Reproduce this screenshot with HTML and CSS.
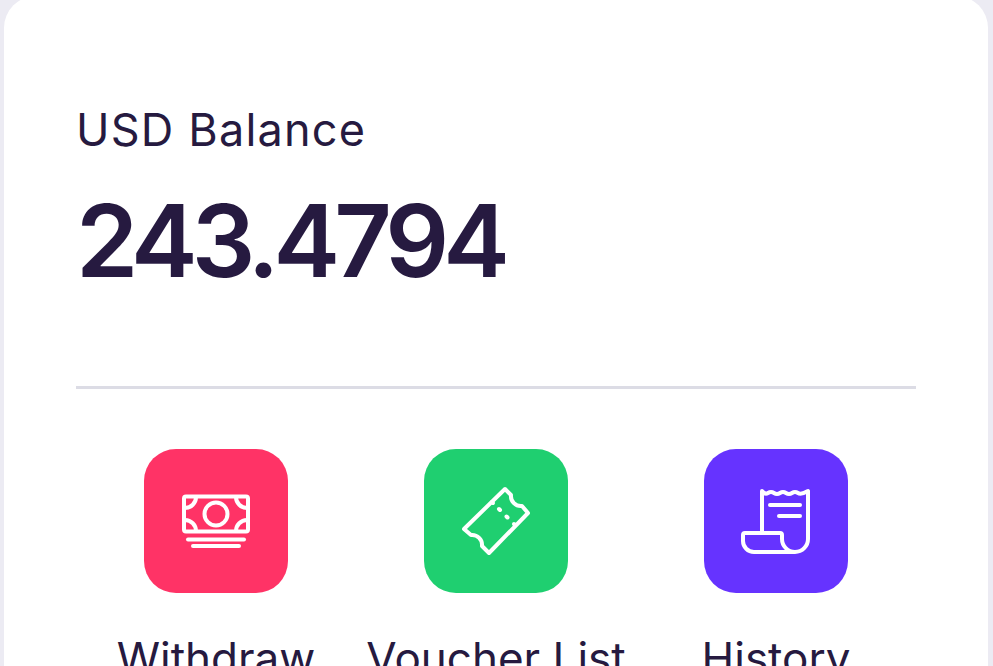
FILE: index.html
```html
<!DOCTYPE html>
<html lang="en">
<head>
    <meta charset="UTF-8">
    <title>USD Balance</title>
    <link rel="stylesheet" href="styles.css">
</head>
<body>
    <div class="card">
        <div class="balance">
            <p class="balance-label">USD Balance</p>
            <p class="balance-value">243.4794</p>
        </div>
        <div class="actions">
            <div class="action">
                <div class="tile tile-withdraw">
                    <svg viewBox="0 0 144 144" width="144" height="144" fill="none" stroke="#fff" stroke-width="4" stroke-linecap="round" stroke-linejoin="round">
                        <rect x="40" y="47.5" width="64" height="35" rx="2"/>
                        <circle cx="72" cy="65" r="11.5"/>
                        <path d="M52 48 A11 11 0 0 1 41 59"/>
                        <path d="M92 48 A11 11 0 0 0 103 59"/>
                        <path d="M52 82 A11 11 0 0 0 41 71"/>
                        <path d="M92 82 A11 11 0 0 1 103 71"/>
                        <path d="M44 90.5 H100"/>
                        <path d="M49 97 H95"/>
                    </svg>
                </div>
                <span class="action-label">Withdraw</span>
            </div>
            <div class="action">
                <div class="tile tile-voucher">
                    <svg viewBox="0 0 144 144" width="144" height="144" fill="none" stroke="#fff" stroke-width="4" stroke-linecap="round" stroke-linejoin="round">
                        <path d="M81 40 L87 46 A10 10 0 0 0 98 57 L104 64 L65 104 L58 97 A10 10 0 0 0 47 86 L40 80 Z"/>
                        <path d="M68 53 L69 54"/>
                        <path d="M75 60 L76 61"/>
                        <path d="M82.5 67.5 L83.5 68.5"/>
                        <path d="M90 75 L91 76"/>
                    </svg>
                </div>
                <span class="action-label">Voucher List</span>
            </div>
            <div class="action">
                <div class="tile tile-history">
                    <svg viewBox="0 0 144 144" width="144" height="144" fill="none" stroke="#fff" stroke-width="4" stroke-linecap="round" stroke-linejoin="round">
                        <path d="M58 83 V42 q3 4 6 2 t6 0 t6 0 t6 0 t6 0 t6 0 t10 -2 V90 a13 13 0 0 1 -13 13 H50 a11 11 0 0 1 -11 -11 v-6 a2 2 0 0 1 2 -2 H76 a2 2 0 0 1 2 2 v4 a13 13 0 0 0 13 13"/>
                        <path d="M66 56 H96"/>
                        <path d="M75 67 H96"/>
                    </svg>
                </div>
                <span class="action-label">History</span>
            </div>
        </div>
    </div>
</body>
</html>
```

FILE: styles.css
```css
html, body {
    height: 100%;
}
body {
    margin: 0;
    padding: 0 5px 0 4px;
    overflow: hidden;
    background-color: #ecebf3;
    color: #261a40;
    font-family: 'Inter', 'Open Sans', sans-serif;
}
.card {
    background-color: #fff;
    border-radius: 32px;
    margin-top: -4px;
    padding: 0 72px;
    height: 760px;
}
.balance {
    padding-top: 108px;
    padding-bottom: 80px;
    border-bottom: 3px solid #dcdce5;
}
.balance-label {
    margin: 0;
    font-size: 45px;
    line-height: 52px;
    font-weight: 400;
    letter-spacing: 1.2px;
}
.balance-value {
    margin: 20px 0 0;
    font-size: 100px;
    line-height: 130px;
    font-weight: 600;
    letter-spacing: -5.8px;
}
.actions {
    display: grid;
    grid-template-columns: repeat(3, 1fr);
    padding-top: 60px;
}
.action {
    display: flex;
    flex-direction: column;
    align-items: center;
    gap: 39px;
}
.tile {
    width: 144px;
    height: 144px;
    border-radius: 32px;
}
.tile svg {
    display: block;
}
.tile-withdraw { background-color: #ff3366; }
.tile-voucher { background-color: #1fcf70; }
.tile-history { background-color: #6633ff; }
.action-label {
    font-size: 44px;
    line-height: 52px;
    white-space: nowrap;
}
```
